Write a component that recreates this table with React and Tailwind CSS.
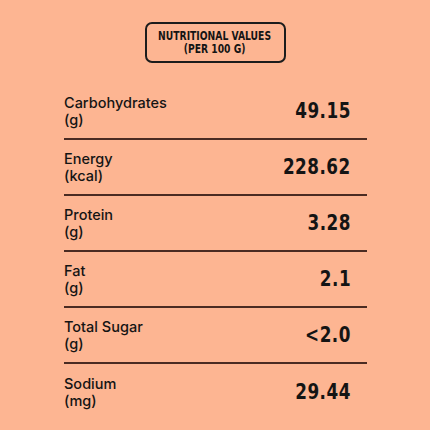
const ROWS = [
  { name: 'Carbohydrates', unit: '(g)', value: '49.15' },
  { name: 'Energy', unit: '(kcal)', value: '228.62' },
  { name: 'Protein', unit: '(g)', value: '3.28' },
  { name: 'Fat', unit: '(g)', value: '2.1' },
  { name: 'Total Sugar', unit: '(g)', value: '<2.0' },
  { name: 'Sodium', unit: '(mg)', value: '29.44' },
]

export default function App() {
  return (
    <div className="w-[430px] h-[430px] bg-[#fdb592] text-[#141414] overflow-hidden">
      <div className="flex justify-center pt-[22px]">
        <div className="w-[141px] h-[41px] border-2 border-[#1c1c1c] rounded-[7px] flex items-center justify-center">
          <div className="flex flex-col items-center scale-x-[0.8] font-['DejaVu_Sans',sans-serif] font-bold text-[11.5px] leading-[13px] whitespace-nowrap">
            <span>NUTRITIONAL VALUES</span>
            <span>(PER 100 G)</span>
          </div>
        </div>
      </div>

      <div className="mx-[64px] w-[303px] mt-[21px]">
        {ROWS.map((r, i) => (
          <div
            key={r.name}
            className={`flex items-center justify-between h-[56px] ${i < ROWS.length - 1 ? 'border-b-2 border-[#4a2b22]' : ''}`}
          >
            <div className="font-['Inter',sans-serif] text-[14.5px] leading-[17px] font-medium">
              <div>{r.name}</div>
              <div>{r.unit}</div>
            </div>
            <div className="mr-[16px] origin-right scale-x-[0.82] font-['DejaVu_Sans',sans-serif] font-bold text-[20.5px] tracking-[0.6px]">
              {r.value}
            </div>
          </div>
        ))}
      </div>
    </div>
  )
}
